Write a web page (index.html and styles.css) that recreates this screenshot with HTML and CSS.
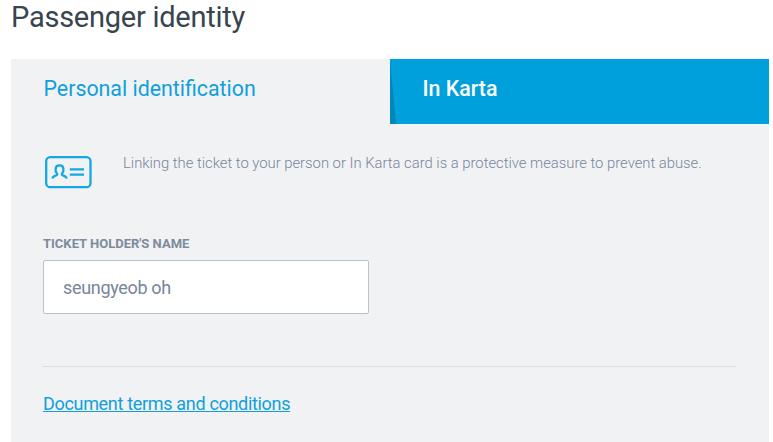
FILE: index.html
```html
<!DOCTYPE html>
<html lang="en">
<head>
<meta charset="utf-8">
<title>Passenger identity</title>
<link rel="stylesheet" href="styles.css">
</head>
<body>
<main class="page">
  <h1 class="title"><span>Passenger identity</span></h1>
  <section class="panel">
    <nav class="tabs">
      <a class="tab tab-active"><span>Personal identification</span></a>
      <a class="tab tab-card"><span>In Karta</span></a>
    </nav>
    <div class="content">
      <div class="info">
        <svg class="id-icon" width="47" height="33" viewBox="0 0 47 33" fill="none" stroke="#14a7e0" stroke-width="2.3">
          <rect x="1.200" y="1.200" width="44.300" height="30" rx="4"/>
          <path d="M7.200 22.500c.7-2.300 2.300-2.400 4.300-3.300.9-.4.9-1.200.3-1.900-1-1.300-1.400-2.700-1.200-4.500.2-2.200 1.700-3.400 3.900-3.400s3.700 1.200 3.900 3.400c.2 1.800-.2 3.200-1.200 4.500-.6.700-.6 1.500.3 1.900 2 .9 3.600 1 4.300 3.300"/>
          <path d="M24.800 13.300h14.200M24.800 18.700h14.200"/>
        </svg>
        <p class="note"><span>Linking the ticket to your person or In Karta card is a protective measure to prevent abuse.</span></p>
      </div>
      <label class="label" for="holder"><span>TICKET HOLDER'S NAME</span></label>
      <input class="field" id="holder" type="text" value="seungyeob oh">
      <div class="footer"><a class="terms" href="#">Document terms and conditions</a></div>
    </div>
  </section>
</main>
</body>
</html>
```
FILE: styles.css
```css
* { box-sizing: border-box; }
body { margin: 0; background: #fff; font-family: Roboto, sans-serif; overflow: hidden; }
.page { height: 442px; padding: 0 4px 0 11px; }
.title { margin: 0; height: 59px; font-size: 29px; letter-spacing: -.25px; line-height: 34px; font-weight: 400; color: #37454f; }
.panel { height: 383px; background: #f1f2f4; }
.tabs { display: grid; grid-template-columns: 379px 1fr; height: 65px; }
.tab { padding-left: 32.5px; font-size: 21.35px; line-height: 60px; }
.tab-active { color: #0fa0dc; }
.tab-card { position: relative; background: #00a0dc; color: #fff; font-weight: 500; }
.tab-card::before { content: ""; position: absolute; left: 0; top: 0; width: 6px; height: 65px; background: #0086bb; clip-path: polygon(0 0, 100% 100%, 0 100%); }
.content { padding: 31px 33px 0 32px; }
.info { display: flex; height: 79px; }
.id-icon { margin: 1px 0 0 2px; flex: none; }
.note { margin: 0 0 0 31px; font-size: 14.8px; line-height: 16px; font-weight: 300; color: #77869a; white-space: nowrap; }
.label { display: block; height: 26px; font-size: 13px; line-height: 20px; font-weight: 700; color: #7c8b9c; }
.field { display: block; width: 326px; height: 54px; padding: 0 19px; border: 1px solid #b9c3cc; border-radius: 2px; background: #fff; font: 400 18px Roboto, sans-serif; letter-spacing: -.33px; color: #77869a; outline: none; }
.footer { margin-top: 52px; padding-top: 26px; border-top: 1px solid #dadde2; font-size: 18px; letter-spacing: -.32px; line-height: 22px; }
.terms { color: #0fa0dc; text-decoration: underline; }
```
